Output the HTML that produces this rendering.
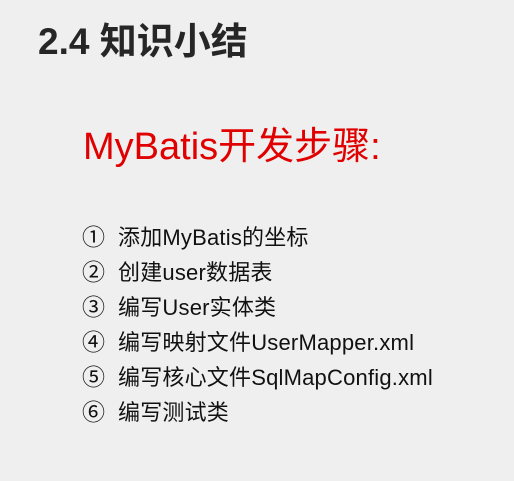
<!DOCTYPE html>
<html><head><meta charset="utf-8"><style>
body{margin:0;width:514px;height:481px;background:#efefef;font-family:"Liberation Sans","Noto Sans CJK SC",sans-serif;position:relative;overflow:hidden}
.t{position:absolute;left:38px;top:20px;font-size:37px;font-weight:bold;color:#262626;line-height:44px;white-space:nowrap}
.r{position:absolute;left:83px;top:123px;font-size:38px;color:#e00000;line-height:48px;white-space:nowrap}
.l{position:absolute;left:82px;font-size:22px;color:#111;line-height:28px;white-space:nowrap;letter-spacing:0.2px}
.l span{display:inline-block;width:36px;font-size:23px;letter-spacing:0}
</style></head><body>
<div class="t">2.4 知识小结</div>
<div class="r">MyBatis开发步骤:</div>
<div class="l" style="top:223px"><span>①</span>添加MyBatis的坐标</div>
<div class="l" style="top:258px"><span>②</span>创建user数据表</div>
<div class="l" style="top:293px"><span>③</span>编写User实体类</div>
<div class="l" style="top:328px"><span>④</span>编写映射文件UserMapper.xml</div>
<div class="l" style="top:363px"><span>⑤</span>编写核心文件SqlMapConfig.xml</div>
<div class="l" style="top:398px"><span>⑥</span>编写测试类</div>
</body></html>
